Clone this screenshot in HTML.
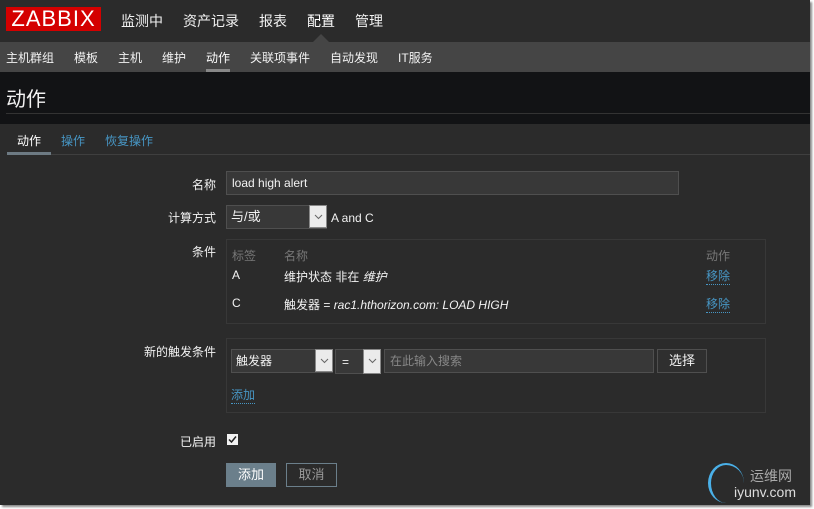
<!DOCTYPE html>
<html><head><meta charset="utf-8"><style>
*{margin:0;padding:0;box-sizing:border-box}
body{width:814px;height:509px;background:#fff;font-family:"Liberation Sans","Noto Sans CJK SC",sans-serif;font-size:12px;color:#f2f2f2;position:relative;overflow:hidden}
#wrap{position:absolute;left:0;top:0;width:810px;height:505px;background:#2b2b2b;box-shadow:2px 2px 2px #888}
.abs{position:absolute}
#top{left:0;top:0;width:810px;height:42px;background:#2b2b2b}
#logo{left:6px;top:7px;width:95px;height:24px;background:#d40000;color:#fff;font-size:22px;line-height:24px;text-align:center;letter-spacing:1px}
.tm{top:11px;font-size:14px;color:#f2f2f2}
#sub{left:0;top:42px;width:810px;height:30px;background:#454545}
.sm{top:49px;font-size:12px;color:#f2f2f2}
#hdr{left:0;top:72px;width:810px;height:52px;background:#121315}
.lbl{font-size:12px;color:#f2f2f2;text-align:right;width:80px}
.inp{background:#383838;border:1px solid #4f4f4f;line-height:16px}
a{color:#4796c4;text-decoration:none}
.dot{border-bottom:1px dotted #4796c4}
.arr{background:#ebebeb;border:1px solid #888}
.arr svg{position:absolute;left:4px;top:8px}
</style></head><body><div id="wrap">
<div class="abs" id="top"></div>
<div class="abs" id="logo">ZABBIX</div>
<div class="abs tm" style="left:121px">监测中</div>
<div class="abs tm" style="left:183px">资产记录</div>
<div class="abs tm" style="left:259px">报表</div>
<div class="abs tm" style="left:307px;color:#fff">配置</div>
<div class="abs tm" style="left:355px">管理</div>
<div class="abs" style="left:313px;top:34px;width:0;height:0;border-left:8px solid transparent;border-right:8px solid transparent;border-bottom:8px solid #454545"></div>
<div class="abs" id="sub"></div>
<div class="abs sm" style="left:6px">主机群组</div>
<div class="abs sm" style="left:74px">模板</div>
<div class="abs sm" style="left:118px">主机</div>
<div class="abs sm" style="left:162px">维护</div>
<div class="abs sm" style="left:206px;color:#fff">动作</div>
<div class="abs" style="left:206px;top:69px;width:24px;height:3px;background:#888"></div>
<div class="abs sm" style="left:250px">关联项事件</div>
<div class="abs sm" style="left:330px">自动发现</div>
<div class="abs sm" style="left:398px">IT服务</div>
<div class="abs" id="hdr"></div>
<div class="abs" style="left:6px;top:83px;font-size:20px;color:#f2f2f2">动作</div>
<div class="abs" style="left:6px;top:113px;width:804px;height:1px;background:#333"></div>
<div class="abs" style="left:6px;top:124px;width:804px;height:380px;background:#2b2b2b"></div>
<div class="abs" style="left:17px;top:132px;color:#fff">动作</div>
<div class="abs" style="left:7px;top:152px;width:44px;height:3px;background:#6d7a83"></div>
<div class="abs" style="left:51px;top:154px;width:759px;height:1px;background:#3f3f3f"></div>
<a class="abs" style="left:61px;top:132px">操作</a>
<a class="abs" style="left:105px;top:132px">恢复操作</a>

<div class="abs lbl" style="left:136px;top:176px">名称</div>
<div class="abs inp" style="left:226px;top:171px;width:453px;height:24px;padding:3px 5px">load high alert</div>
<div class="abs lbl" style="left:136px;top:209px">计算方式</div>
<div class="abs inp" style="left:226px;top:205px;width:101px;height:24px;padding:3px 4px;font-size:13px">与/或</div>
<div class="abs arr" style="left:309px;top:205px;width:18px;height:23px"><svg width="9" height="6"><path d="M1 1L4.5 4.5L8 1" stroke="#666" fill="none"/></svg></div>
<div class="abs" style="left:331px;top:211px">A and C</div>
<div class="abs lbl" style="left:136px;top:243px">条件</div>
<div class="abs" style="left:226px;top:239px;width:540px;height:85px;border:1px solid #383838"></div>
<div class="abs" style="left:232px;top:247px;color:#777">标签</div>
<div class="abs" style="left:284px;top:247px;color:#777">名称</div>
<div class="abs" style="left:706px;top:247px;color:#777">动作</div>
<div class="abs" style="left:232px;top:268px">A</div>
<div class="abs" style="left:284px;top:268px">维护状态 非在 <i>维护</i></div>
<a class="abs dot" style="left:706px;top:267px">移除</a>
<div class="abs" style="left:232px;top:296px">C</div>
<div class="abs" style="left:284px;top:296px">触发器 = <i>rac1.hthorizon.com: LOAD HIGH</i></div>
<a class="abs dot" style="left:706px;top:295px">移除</a>

<div class="abs lbl" style="left:136px;top:343px">新的触发条件</div>
<div class="abs" style="left:226px;top:338px;width:540px;height:75px;border:1px solid #383838"></div>
<div class="abs inp" style="left:231px;top:349px;width:102px;height:24px;padding:3px 4px">触发器</div>
<div class="abs arr" style="left:315px;top:349px;width:18px;height:23px"><svg width="9" height="6"><path d="M1 1L4.5 4.5L8 1" stroke="#666" fill="none"/></svg></div>
<div class="abs inp" style="left:335px;top:349px;width:46px;height:25px;padding:4px 6px">=</div>
<div class="abs arr" style="left:363px;top:349px;width:18px;height:25px"><svg width="9" height="6"><path d="M1 1L4.5 4.5L8 1" stroke="#666" fill="none"/></svg></div>
<div class="abs inp" style="left:384px;top:349px;width:270px;height:24px;padding:3px 5px;color:#888">在此输入搜索</div>
<div class="abs" style="left:657px;top:349px;width:50px;height:24px;border:1px solid #4f4f4f;background:#2f2f2f;text-align:center;line-height:22px;font-size:13px">选择</div>
<a class="abs dot" style="left:231px;top:386px">添加</a>

<div class="abs lbl" style="left:136px;top:433px">已启用</div>
<div class="abs" style="left:227px;top:434px;width:11px;height:11px;background:#f2f2f2"><svg width="11" height="11" style="position:absolute;left:0;top:0"><path d="M2 5.5L4.5 8L9 2.5" stroke="#222" stroke-width="1.5" fill="none"/></svg></div>
<div class="abs" style="left:226px;top:463px;width:50px;height:24px;background:#6b7f8b;text-align:center;line-height:24px;font-size:13px;color:#fff">添加</div>
<div class="abs" style="left:286px;top:463px;width:51px;height:24px;border:1px solid #6b7f8b;text-align:center;line-height:22px;font-size:13px;color:#999">取消</div>
<div class="abs" style="left:708px;top:463px;width:36px;height:40px;border-left:3px solid #4ab0e8;border-top:2px solid #4ab0e8;border-radius:50%"></div>
<div class="abs" style="left:750px;top:466px;font-size:14px;color:#aaa">运维网</div>
<div class="abs" style="left:734px;top:484px;font-size:14px;color:#ddd">iyunv.com</div>
</div></body></html>
